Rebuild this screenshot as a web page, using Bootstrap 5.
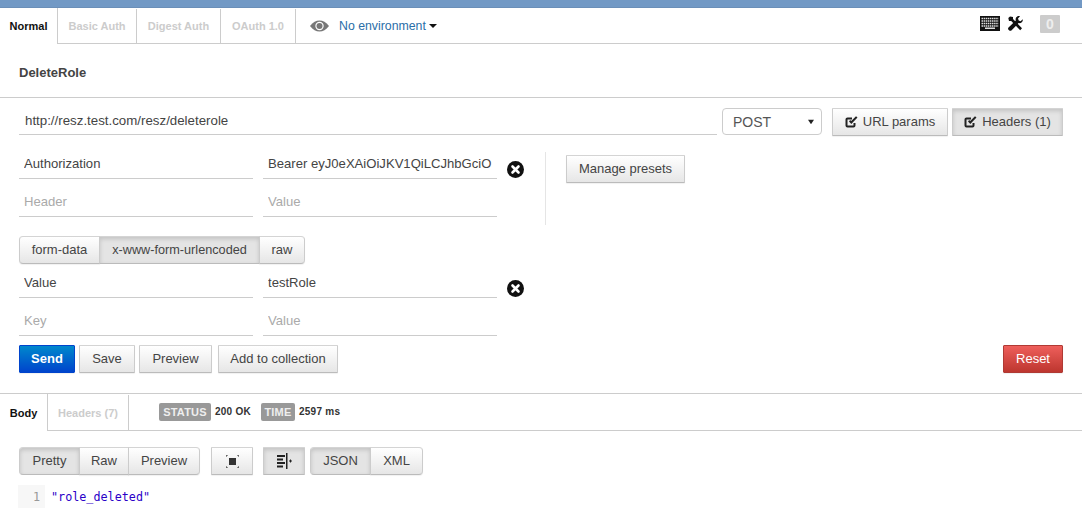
<!DOCTYPE html>
<html lang="en">
<head>
<meta charset="utf-8">
<title>Postman</title>
<link rel="stylesheet" href="https://cdn.jsdelivr.net/npm/bootstrap@5.3.0/dist/css/bootstrap.min.css">
<style>
html,body{height:511px;overflow:hidden;background:#fff}
body{font-family:"Liberation Sans",Arial,sans-serif;font-size:13px;color:#333;line-height:18px}
.topstrip{height:8px;background:#7299c5;border-bottom:1px solid #6b8fb8}
.tabbar{height:36px;border-bottom:1px solid #ccc}
.tabitem{height:35px;font-size:11px;font-weight:700;color:#ccc;border-right:1px solid #ccc;text-decoration:none;margin-bottom:-1px}
.tabitem.on{color:#111;background:#fff;height:36px}
.tw-normal{width:58px}.tw-basic{width:79px}.tw-digest{width:84px}.tw-oauth{width:75px}
.tw-body{width:48px}.tw-heads{width:81px}
.eyeicon{margin-left:14px;margin-right:10px}
.envlink{color:#2a6ea8;font-size:12.300px;text-decoration:none}
.envcaret{display:inline-block;border-left:4px solid transparent;border-right:4px solid transparent;border-top:4px solid #111;margin-left:3px;vertical-align:2px}
.rightgroup{margin-top:-4px}
.countbox{width:20px;height:18px;margin-left:17px;margin-right:22px;background:#ccc;color:#eee;border-radius:1px;font-size:14px;font-weight:700}
.wrenchicon{margin-left:8px}
.titlerow{height:54px;padding-left:19px;padding-top:4px;border-bottom:1px solid #ccc;font-size:13px;font-weight:700;color:#444}
.urlrow{padding:10px 19px 0;height:48px}
.flatinput.form-control{border:0;border-bottom:1px solid #ccc;border-radius:0;padding:0 5px 2px;height:29px;font-size:13.100px;color:#444;background:transparent;box-shadow:none;line-height:18px}
.flatinput.form-control::placeholder{color:#aaa;opacity:1}
.urlbox.form-control{width:698px;margin-right:5px;height:27px;font-size:13.300px;padding-left:6px}
.methodsel.form-select{width:100px;height:27px;margin-right:10px;border:1px solid #ccc;border-radius:4px;padding:1px 10px 0;font-size:14px;color:#555;background-color:#fff;background-size:6px 6px;background-position:right 7px center;background-image:url("data:image/svg+xml,%3Csvg xmlns='http://www.w3.org/2000/svg' viewBox='0 0 9 7'%3E%3Cpath d='M0 0h9L4.500 7z' fill='%23222'/%3E%3C/svg%3E");box-shadow:none}
.postbtn.btn{--bs-btn-padding-x:0;--bs-btn-padding-y:0;height:28px;font-size:13px;line-height:26px;color:#444;border:1px solid #ccc;border-color:#d4d4d4 #ccc #bbb;border-radius:1px;background:linear-gradient(#fff,#e6e6e6);box-shadow:0 1px 1px rgba(0,0,0,.06);padding:0;display:inline-flex;align-items:center;justify-content:center;font-weight:400}
.postbtn.btn.pressed{background:#e4e4e4;box-shadow:inset 0 2px 4px rgba(0,0,0,.15)}
.postbtn.btn.blue{background:linear-gradient(#0088cc,#0044cc);color:#fff;font-weight:700;border-color:#0044cc}
.postbtn.btn.red{background:linear-gradient(#ee5f5b,#bd362f);color:#fff;border-color:#b03a34}
.btn-group .postbtn.btn:first-child{border-radius:4px 0 0 4px}
.btn-group .postbtn.btn:last-child{border-radius:0 4px 4px 0}
.w-urlp{width:116px;margin-right:4px}.w-heads{width:111px}
.editglyph{margin-right:5px}
.editorrow{padding:0 0 0 19px}
.paramgrid{display:grid;grid-template-columns:234px 234px;grid-auto-rows:29px;align-content:start;column-gap:10px;row-gap:9px;width:478px}
.headersblock{height:90px;padding-top:4px}
.delcol{width:48px}
.delicon{display:block;margin:11px 0 0 10px}
.vrule{border-left:1px solid #e5e5e5;height:73px;margin-top:2px}
.presetcol{padding:5px 0 0 20px}
.w-presets{width:119px}
.modegroup{padding-left:19px;height:33px}
.w-form{width:81px}.postbtn.btn.w-url{width:161px;font-size:12.700px}.w-raw{width:46px}
.bodyblock{height:67px}
.actionrow{padding:9px 19px 0;height:57px}
.w-send{width:56px;margin-right:4px}.w-save{width:56px;margin-right:4px}.w-prev{width:73px;margin-right:6px}.w-coll{width:120px}.w-reset{width:60px}
.resbar{height:38px;border-top:1px solid #ccc;border-bottom:1px solid #ccc}
.resbar .tabitem{height:36px}
.resbar .tabitem.on{height:37px}
.statusstrip{margin-left:30px;font-size:10px;font-weight:700;color:#333;margin-top:-1px;letter-spacing:.25px}
.grayflag{background:#999;color:#eee;border-radius:2px;font-size:11px;font-weight:700;height:18px;line-height:18px;text-align:center;letter-spacing:.2px}
.w-st{width:52px;margin-right:4px}.w-ti{width:34px;margin-left:10px;margin-right:4px}
.viewrow{padding:16px 0 0 19px;height:54px}
.w-pretty{width:61px}.w-raw2{width:50px}.w-prev2{width:72px}.w-i1{width:42px;margin-left:11px}.w-i2{width:42px;margin-left:10px;margin-right:5px}.w-json{width:61px}.w-xml{width:53px}
.coderow{padding-left:18px;font-family:"DejaVu Sans Mono",monospace;font-size:11.750px;height:23px;line-height:25px}
.gutter{width:27px;background:#f7f7f7;color:#999;text-align:right;padding-right:5px;height:23px;margin-right:6px}
.jsonstr{color:#2a00c8}
</style>
</head>
<body>
<div class="topstrip"></div>
<div class="tabbar d-flex align-items-center">
  <a class="tabitem on tw-normal d-flex align-items-center justify-content-center">Normal</a>
  <a class="tabitem tw-basic d-flex align-items-center justify-content-center">Basic Auth</a>
  <a class="tabitem tw-digest d-flex align-items-center justify-content-center">Digest Auth</a>
  <a class="tabitem tw-oauth d-flex align-items-center justify-content-center">OAuth 1.0</a>
  <svg class="eyeicon" width="19" height="12" viewBox="0 0 19 12"><path d="M0 6C3 2 6 .5 9.500 .5S16 2 19 6c-3 4-6 5.500-9.500 5.500S3 10 0 6z" fill="#777"/><circle cx="9.500" cy="6" r="4.200" fill="#fff"/><circle cx="9.500" cy="6" r="3" fill="#777"/></svg>
  <a class="envlink">No environment<span class="envcaret"></span></a>
  <div class="rightgroup ms-auto d-flex align-items-center">
    <svg width="20" height="15" viewBox="0 0 20 15"><rect width="20" height="15" fill="#111"/><path d="M1.500 2.500h17M1.500 5h17M1.500 7.500h17M1.500 10h17" stroke="#ddd" stroke-width="1.300" stroke-dasharray="1.500 .6"/><rect x="5" y="11.500" width="10" height="1.500" fill="#ddd"/></svg>
    <svg class="wrenchicon" width="15" height="15" viewBox="0 0 15 15"><path d="M2 .5 5 1v2l9 9.200-1.800 2L3.200 5H1L.3 2z" fill="#111"/><path d="M14.700 3.200 12.600 5.300 10.700 4.500 10 2.400 12 .3C10.300-.3 8.300.6 7.800 2.300 7.600 3 7.600 3.700 7.800 4.400L.5 11.600c-.6.600-.6 1.500 0 2.100l.8.700c.6.600 1.500.6 2.100 0l7.200-7.300c2.300.7 4.800-1.400 4.100-3.900z" fill="#111"/></svg>
    <div class="countbox d-flex align-items-center justify-content-center">0</div>
  </div>
</div>
<div class="titlerow d-flex align-items-center"><span>DeleteRole</span></div>
<div class="urlrow d-flex align-items-start">
  <input class="form-control flatinput urlbox flex-shrink-0" value="http://resz.test.com/resz/deleterole">
  <select class="form-select methodsel flex-shrink-0"><option>POST</option></select>
  <button class="btn postbtn w-urlp flex-shrink-0"><svg class="editglyph" width="13" height="12" viewBox="0 0 13 12"><path d="M9.500 7v2.500a1 1 0 0 1-1 1H2.500a1 1 0 0 1-1-1V3.500a1 1 0 0 1 1-1H7" fill="none" stroke="#222" stroke-width="2"/><path d="M4 5.500 6.300 8 12.500 1.500 11 .2 6.200 5 5.200 4z" fill="#222"/></svg>URL params</button>
  <button class="btn postbtn pressed w-heads flex-shrink-0"><svg class="editglyph" width="13" height="12" viewBox="0 0 13 12"><path d="M9.500 7v2.500a1 1 0 0 1-1 1H2.500a1 1 0 0 1-1-1V3.500a1 1 0 0 1 1-1H7" fill="none" stroke="#222" stroke-width="2"/><path d="M4 5.500 6.300 8 12.500 1.500 11 .2 6.200 5 5.200 4z" fill="#222"/></svg>Headers (1)</button>
</div>
<div class="editorrow headersblock d-flex">
  <div class="paramgrid">
    <input class="form-control flatinput" value="Authorization">
    <input class="form-control flatinput" value="Bearer eyJ0eXAiOiJKV1QiLCJhbGciO">
    <input class="form-control flatinput" placeholder="Header">
    <input class="form-control flatinput" placeholder="Value">
  </div>
  <div class="delcol"><svg class="delicon" width="17" height="17" viewBox="0 0 17 17"><circle cx="8.500" cy="8.500" r="8.500" fill="#111"/><path d="M5.500 5.500l6 6M11.500 5.500l-6 6" stroke="#fff" stroke-width="2.600" stroke-linecap="round"/></svg></div>
  <div class="vrule"></div>
  <div class="presetcol"><button class="btn postbtn w-presets">Manage presets</button></div>
</div>
<div class="modegroup">
  <div class="btn-group">
    <button class="btn postbtn w-form">form-data</button>
    <button class="btn postbtn pressed w-url">x-www-form-urlencoded</button>
    <button class="btn postbtn w-raw">raw</button>
  </div>
</div>
<div class="editorrow bodyblock d-flex">
  <div class="paramgrid">
    <input class="form-control flatinput" value="Value">
    <input class="form-control flatinput" value="testRole">
    <input class="form-control flatinput" placeholder="Key">
    <input class="form-control flatinput" placeholder="Value">
  </div>
  <div class="delcol"><svg class="delicon" width="17" height="17" viewBox="0 0 17 17"><circle cx="8.500" cy="8.500" r="8.500" fill="#111"/><path d="M5.500 5.500l6 6M11.500 5.500l-6 6" stroke="#fff" stroke-width="2.600" stroke-linecap="round"/></svg></div>
</div>
<div class="actionrow d-flex align-items-start">
  <button class="btn postbtn blue w-send">Send</button>
  <button class="btn postbtn w-save">Save</button>
  <button class="btn postbtn w-prev">Preview</button>
  <button class="btn postbtn w-coll">Add to collection</button>
  <button class="btn postbtn red w-reset ms-auto">Reset</button>
</div>
<div class="resbar d-flex align-items-center">
  <a class="tabitem on tw-body d-flex align-items-center justify-content-center">Body</a>
  <a class="tabitem tw-heads d-flex align-items-center justify-content-center">Headers (7)</a>
  <div class="statusstrip d-flex align-items-center">
    <span class="grayflag w-st">STATUS</span><span>200 OK</span>
    <span class="grayflag w-ti">TIME</span><span>2597 ms</span>
  </div>
</div>
<div class="viewrow d-flex align-items-start">
  <div class="btn-group">
    <button class="btn postbtn pressed w-pretty">Pretty</button>
    <button class="btn postbtn w-raw2">Raw</button>
    <button class="btn postbtn w-prev2">Preview</button>
  </div>
  <button class="btn postbtn w-i1"><svg width="13" height="13" viewBox="0 0 13 13"><rect x="3" y="3" width="7" height="7" fill="#333"/><path d="M0 2V0h2M11 0h2v2M13 11v2h-2M2 13H0v-2" fill="none" stroke="#333"/></svg></button>
  <button class="btn postbtn pressed w-i2"><svg width="16" height="16" viewBox="0 0 16 16"><path d="M1 2h8v2H1zM1 5.500h6v2H1zM1 9h8v2H1zM1 12.500h6v2H1z" fill="#222"/><path d="M10 0h1.500v16H10z" fill="#222"/><path d="M13 7.500h1V6.500h1v1h1v1h-1v1h-1v-1h-1z" fill="#222"/></svg></button>
  <div class="btn-group">
    <button class="btn postbtn pressed w-json">JSON</button>
    <button class="btn postbtn w-xml">XML</button>
  </div>
</div>
<div class="coderow d-flex">
  <div class="gutter">1</div>
  <div class="jsonstr">"role_deleted"</div>
</div>
<script src="https://cdn.jsdelivr.net/npm/bootstrap@5.3.0/dist/js/bootstrap.bundle.min.js"></script>
</body>
</html>
